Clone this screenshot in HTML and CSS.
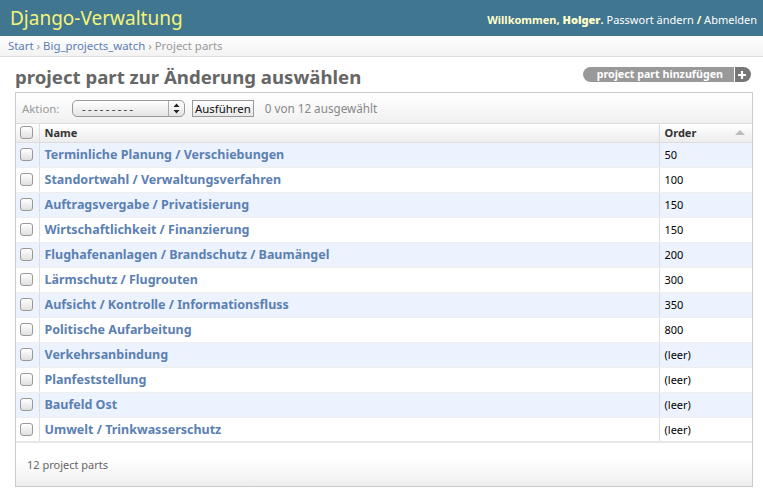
FILE: index.html
```html
<!DOCTYPE html>
<html lang="de">
<head>
<meta charset="utf-8">
<title>project part zur Änderung auswählen</title>
<link rel="stylesheet" href="styles.css">
</head>
<body>
<div class="header">
  <h1 class="branding">Django-Verwaltung</h1>
  <div class="user-tools">Willkommen, <strong>Holger</strong>. <a href="#">Passwort ändern</a> / <a href="#">Abmelden</a></div>
</div>
<div class="breadcrumbs"><a href="#">Start</a> <span class="sep">›</span> <a href="#">Big_projects_watch</a> <span class="sep">›</span> Project parts</div>
<div class="content">
  <div class="title-row">
    <h1 class="page-title">project part zur Änderung auswählen</h1>
    <a class="addlink" href="#"><span class="addlabel">project part hinzufügen</span><span class="addplus"><svg width="10" height="10" viewBox="0 0 10 10"><path d="M5 1v8M1 5h8" stroke="#fff" stroke-width="2.2"/></svg></span></a>
  </div>
  <div class="module">
    <div class="actions">
      <span class="act-label">Aktion:</span>
      <span class="select"><span class="select-text">---------</span><span class="select-arrows"><svg width="7" height="11" viewBox="0 0 7 11"><path d="M3.5 0.5L6.5 4H0.5Z M3.5 10.5L6.5 7H0.5Z" fill="#222"/></svg></span></span>
      <span class="button">Ausführen</span>
      <span class="counter">0 von 12 ausgewählt</span>
    </div>
    <table class="result-list">
      <thead>
        <tr>
          <th class="col-check"><span class="cb"></span></th>
          <th class="col-name">Name</th>
          <th class="col-order">Order<span class="sort"></span></th>
        </tr>
      </thead>
      <tbody>
        <tr class="row1"><td class="col-check"><span class="cb"></span></td><td class="col-name"><a href="#">Terminliche Planung / Verschiebungen</a></td><td class="col-order">50</td></tr>
        <tr class="row2"><td class="col-check"><span class="cb"></span></td><td class="col-name"><a href="#">Standortwahl / Verwaltungsverfahren</a></td><td class="col-order">100</td></tr>
        <tr class="row1"><td class="col-check"><span class="cb"></span></td><td class="col-name"><a href="#">Auftragsvergabe / Privatisierung</a></td><td class="col-order">150</td></tr>
        <tr class="row2"><td class="col-check"><span class="cb"></span></td><td class="col-name"><a href="#">Wirtschaftlichkeit / Finanzierung</a></td><td class="col-order">150</td></tr>
        <tr class="row1"><td class="col-check"><span class="cb"></span></td><td class="col-name"><a href="#">Flughafenanlagen / Brandschutz / Baumängel</a></td><td class="col-order">200</td></tr>
        <tr class="row2"><td class="col-check"><span class="cb"></span></td><td class="col-name"><a href="#">Lärmschutz / Flugrouten</a></td><td class="col-order">300</td></tr>
        <tr class="row1"><td class="col-check"><span class="cb"></span></td><td class="col-name"><a href="#">Aufsicht / Kontrolle / Informationsfluss</a></td><td class="col-order">350</td></tr>
        <tr class="row2"><td class="col-check"><span class="cb"></span></td><td class="col-name"><a href="#">Politische Aufarbeitung</a></td><td class="col-order">800</td></tr>
        <tr class="row1"><td class="col-check"><span class="cb"></span></td><td class="col-name"><a href="#">Verkehrsanbindung</a></td><td class="col-order">(leer)</td></tr>
        <tr class="row2"><td class="col-check"><span class="cb"></span></td><td class="col-name"><a href="#">Planfeststellung</a></td><td class="col-order">(leer)</td></tr>
        <tr class="row1"><td class="col-check"><span class="cb"></span></td><td class="col-name"><a href="#">Baufeld Ost</a></td><td class="col-order">(leer)</td></tr>
        <tr class="row2"><td class="col-check"><span class="cb"></span></td><td class="col-name"><a href="#">Umwelt / Trinkwasserschutz</a></td><td class="col-order">(leer)</td></tr>
      </tbody>
    </table>
    <div class="paginator">12 project parts</div>
  </div>
</div>
</body>
</html>
```
FILE: styles.css
```css
* { box-sizing: border-box; }
body {
  margin: 0;
  font-family: "Noto Sans", "DejaVu Sans", sans-serif;
  color: #333;
  background: #fff;
}
a { text-decoration: none; }

.header {
  height: 36px;
  background: #417690;
  display: flex;
  justify-content: space-between;
  align-items: center;
  padding: 0 6px 0 10px;
}
.branding {
  margin: 0;
  font-size: 19px;
  font-weight: normal;
  color: #f4f379;
}
.user-tools {
  font-size: 11px;
  color: #ffc;
  font-weight: bold;
  margin-top: 2px;
}
.user-tools a { color: #fff; font-weight: normal; }

.breadcrumbs {
  height: 21px;
  line-height: 20px;
  padding: 0 8px;
  font-size: 11.4px;
  color: #999;
  background: linear-gradient(#fff, #f2f2f2);
  border-bottom: 1px solid #ddd;
}
.breadcrumbs a { color: #5b80b2; }
.breadcrumbs .sep { color: #999; }

.content { padding: 6px 10px 0 15px; }

.title-row {
  display: flex;
  justify-content: space-between;
  align-items: center;
  height: 26px;
}
.page-title {
  margin: 0;
  font-size: 18.6px;
  font-weight: bold;
  color: #666;
}
.addlink {
  display: flex;
  height: 15px;
  margin-right: 2px;
  margin-top: -3px;
}
.addlabel {
  background: #999;
  color: #fff;
  font-size: 10.7px;
  font-weight: bold;
  line-height: 15px;
  padding: 0 11px 0 14px;
  border-radius: 8px 0 0 8px;
}
.addplus {
  width: 16px;
  background: #777;
  margin-left: 1px;
  border-radius: 0 8px 8px 0;
  display: flex;
  align-items: center;
  justify-content: center;
  padding-right: 2px;
}

.module {
  margin-top: 3px;
  border: 1px solid #ccc;
}
.actions {
  height: 31px;
  display: flex;
  align-items: center;
  padding-left: 6px;
  font-size: 11.4px;
  color: #999;
  background: linear-gradient(#fff, #f0f0f0);
  border-bottom: 1px solid #ddd;
}
.act-label { width: 50px; }
.select {
  display: flex;
  align-items: center;
  width: 113px;
  height: 17px;
  border: 1px solid #999;
  border-radius: 5px;
  background: linear-gradient(#fff, #e4e4e4);
  color: #333;
  font-size: 11px;
}
.select-text { flex: 1; padding-left: 9px; letter-spacing: 2.4px; }
.select-arrows {
  width: 16px;
  height: 100%;
  border-left: 1px solid #aaa;
  display: flex;
  align-items: center;
  justify-content: center;
}
.button {
  margin-left: 7px;
  height: 17px;
  line-height: 15px;
  padding: 0 2px;
  border: 1px solid #999;
  background: linear-gradient(#fff, #e8e8e8);
  color: #111;
  font-size: 11.4px;
}
.counter { margin-left: 11px; color: #888; font-size: 11.7px; }

.result-list {
  width: 100%;
  border-collapse: collapse;
  font-size: 11px;
}
.result-list th {
  height: 18px;
  text-align: left;
  font-weight: bold;
  color: #333;
  background: linear-gradient(#fff, #ececec);
  border-bottom: 1px solid #ddd;
  padding: 0 5px;
}
.result-list td {
  height: 25px;
  border-bottom: 1px solid #eee;
  padding: 0 5px;
}
.result-list .col-check {
  width: 23px;
  padding: 0 0 0 4px;
  border-right: 1px solid #ddd;
}
.result-list .col-order {
  width: 93px;
  border-left: 1px solid #ddd;
  color: #000;
  position: relative;
}
.result-list th.col-order { color: #333; }
.result-list tr.row1 td { background: #edf3fe; }
.result-list tr.row2 td { background: #fff; }
.result-list tbody tr:last-child td { border-bottom: 2px solid #e6e6e6; }
.col-name a {
  color: #5b80b2;
  font-weight: bold;
  font-size: 12.5px;
}
.cb {
  display: block;
  width: 13px;
  height: 13px;
  border: 1px solid #999;
  border-radius: 3px;
  background: linear-gradient(#fff, #e0e0e0);
}
.sort {
  position: absolute;
  right: 7px;
  top: 6px;
  width: 0;
  height: 0;
  border-left: 5px solid transparent;
  border-right: 5px solid transparent;
  border-bottom: 5px solid #bbb;
}

.paginator {
  height: 43px;
  line-height: 43px;
  padding-left: 11px;
  font-size: 11px;
  color: #666;
  background: linear-gradient(#fff 40%, #eee);
}
```
